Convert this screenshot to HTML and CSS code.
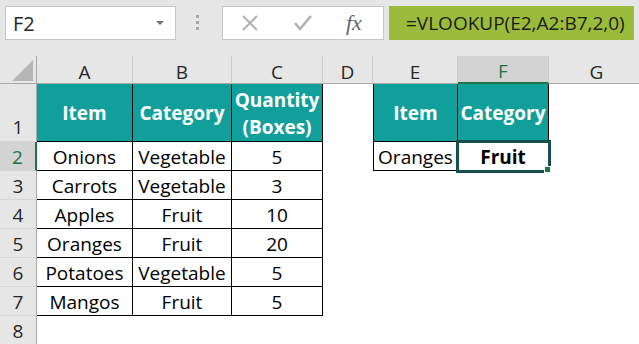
FILE: index.html
```html
<!DOCTYPE html>
<html lang="en">
<head>
    <meta charset="UTF-8">
    <title>VLOOKUP example</title>
    <link rel="stylesheet" href="styles.css">
</head>
<body>
    <div class="toolbar">
        <div class="namebox">
            <span>F2</span>
            <span class="arrow"></span>
        </div>
        <div class="dots"><i></i><i></i><i></i></div>
        <div class="fbuttons">
            <svg class="icon" width="18" height="18" viewBox="0 0 18 18">
                <path d="M2 2 L16 16 M16 2 L2 16" stroke="#b3b3b3" stroke-width="2.2" fill="none"/>
            </svg>
            <svg class="icon" width="20" height="18" viewBox="0 0 20 18">
                <path d="M2 9 L7 15 L18 2" stroke="#b3b3b3" stroke-width="2.6" fill="none"/>
            </svg>
            <span class="fx">fx</span>
        </div>
        <div class="formula">=VLOOKUP(E2,A2:B7,2,0)</div>
    </div>

    <div class="sheet">
        <div class="ch corner"><span class="tri"></span></div>
        <div class="ch">A</div>
        <div class="ch">B</div>
        <div class="ch">C</div>
        <div class="ch">D</div>
        <div class="ch">E</div>
        <div class="ch sel">F</div>
        <div class="ch">G</div>

        <div class="rh first-row">1</div>
        <div class="th">Item</div>
        <div class="th">Category</div>
        <div class="th">Quantity<br>(Boxes)</div>
        <div class="c"></div>
        <div class="th first">Item</div>
        <div class="th">Category</div>
        <div class="c"></div>

        <div class="rh sel">2</div>
        <div class="td">Onions</div>
        <div class="td">Vegetable</div>
        <div class="td">5</div>
        <div class="c"></div>
        <div class="td first">Oranges</div>
        <div class="td active">Fruit</div>
        <div class="c"></div>

        <div class="rh">3</div>
        <div class="td">Carrots</div>
        <div class="td">Vegetable</div>
        <div class="td">3</div>
        <div class="c"></div>
        <div class="c"></div>
        <div class="c"></div>
        <div class="c"></div>

        <div class="rh">4</div>
        <div class="td">Apples</div>
        <div class="td">Fruit</div>
        <div class="td">10</div>
        <div class="c"></div>
        <div class="c"></div>
        <div class="c"></div>
        <div class="c"></div>

        <div class="rh">5</div>
        <div class="td">Oranges</div>
        <div class="td">Fruit</div>
        <div class="td">20</div>
        <div class="c"></div>
        <div class="c"></div>
        <div class="c"></div>
        <div class="c"></div>

        <div class="rh">6</div>
        <div class="td">Potatoes</div>
        <div class="td">Vegetable</div>
        <div class="td">5</div>
        <div class="c"></div>
        <div class="c"></div>
        <div class="c"></div>
        <div class="c"></div>

        <div class="rh">7</div>
        <div class="td">Mangos</div>
        <div class="td">Fruit</div>
        <div class="td">5</div>
        <div class="c"></div>
        <div class="c"></div>
        <div class="c"></div>
        <div class="c"></div>

        <div class="rh">8</div>
        <div class="c"></div>
        <div class="c"></div>
        <div class="c"></div>
        <div class="c"></div>
        <div class="c"></div>
        <div class="c"></div>
        <div class="c"></div>
    </div>
</body>
</html>
```

FILE: styles.css
```css
body {
    margin: 0;
    background: #fff;
    font-family: "Open Sans", "Liberation Sans", sans-serif;
    overflow: hidden;
}
.toolbar {
    display: flex;
    align-items: flex-start;
    height: 56px;
    padding: 6px 0 0 5px;
    box-sizing: border-box;
    background: #e6e6e6;
}
.namebox {
    display: flex;
    align-items: center;
    justify-content: space-between;
    width: 171px;
    height: 34px;
    box-sizing: border-box;
    padding: 0 11px 0 7px;
    background: #fff;
    border: 1px solid #c6c6c6;
    font-size: 20px;
    color: #262626;
}
.arrow {
    width: 0;
    height: 0;
    border-left: 4px solid transparent;
    border-right: 4px solid transparent;
    border-top: 4px solid #707070;
}
.dots {
    display: flex;
    flex-direction: column;
    gap: 3px;
    margin: 9px 23px 0 20px;
}
.dots i {
    display: block;
    width: 3px;
    height: 3px;
    background: #a6a6a6;
}
.fbuttons {
    display: flex;
    align-items: center;
    width: 162px;
    height: 34px;
    box-sizing: border-box;
    padding-left: 18px;
    background: #fff;
    border: 1px solid #c6c6c6;
}
.fbuttons .icon + .icon {
    margin-left: 34px;
}
.fx {
    margin-left: 33px;
    font-family: "Liberation Serif", serif;
    font-style: italic;
    font-size: 22px;
    color: #666;
}
.formula {
    width: 245px;
    height: 34px;
    box-sizing: border-box;
    margin-left: 5px;
    padding: 4px 0 0 17px;
    background: #9bbb3b;
    font-size: 19px;
    color: #1c1c1c;
    white-space: nowrap;
}
.sheet {
    display: grid;
    grid-template-columns: 37px 96px 99px 91px 50px 85px 91px 96px;
    grid-template-rows: 28px 58px repeat(7, 29px);
}
.sheet > div {
    box-sizing: border-box;
    display: flex;
    align-items: center;
    justify-content: center;
    text-align: center;
}
.ch {
    background: #e6e6e6;
    border-right: 1px solid #cbcbcb;
    border-bottom: 1px solid #a8a8a8;
    font-size: 19px;
    color: #262626;
    padding-top: 4px;
}
.ch.corner {
    position: relative;
    border-right: 1px solid #a8a8a8;
}
.tri {
    position: absolute;
    right: 3px;
    bottom: 2px;
    width: 0;
    height: 0;
    border-left: 21px solid transparent;
    border-bottom: 21px solid #b5b5b5;
}
.ch.sel {
    background: #d3d3d3;
    color: #217346;
    border-bottom: 2px solid #217346;
}
.rh {
    background: #e6e6e6;
    border-right: 1px solid #a8a8a8;
    border-bottom: 1px solid #d6d6d6;
    font-size: 19px;
    color: #262626;
    padding-top: 2px;
}
.rh.first-row {
    align-items: flex-end;
    padding-bottom: 1px;
}
.rh.sel {
    background: #d3d3d3;
    color: #217346;
    border-right: 2px solid #217346;
}
.th {
    background: #109f9a;
    color: #fff;
    font-weight: bold;
    font-size: 19px;
    line-height: 27px;
    padding-top: 2px;
    border-right: 1px solid #000;
    border-bottom: 1px solid #000;
}
.td {
    font-size: 19px;
    color: #000;
    padding-top: 2px;
    border-right: 1px solid #000;
    border-bottom: 1px solid #000;
    white-space: nowrap;
}
.first {
    border-left: 1px solid #000;
}
.td.active {
    position: relative;
    font-weight: bold;
    outline: 3px solid #164f4c;
    outline-offset: -1px;
}
.td.active::after {
    content: "";
    position: absolute;
    right: -3px;
    bottom: -3px;
    width: 5px;
    height: 5px;
    background: #217346;
    border: 1px solid #fff;
}
```
